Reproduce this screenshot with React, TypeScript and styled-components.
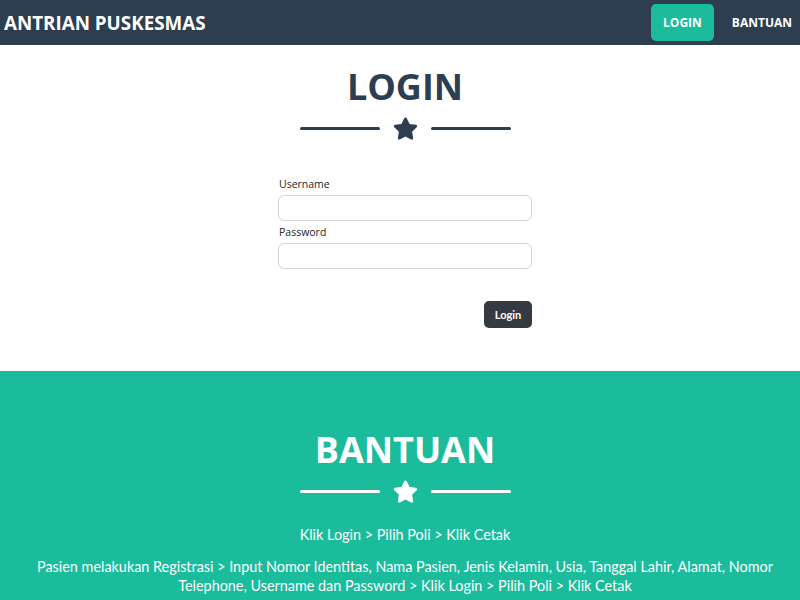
import React from 'react'
import styled, { createGlobalStyle } from 'styled-components'

const Global = createGlobalStyle`
  * { box-sizing: border-box; }
  body {
    margin: 0;
    font-family: Lato, "Open Sans", sans-serif;
    background: #fff;
  }
`

const Nav = styled.nav`
  height: 45px;
  background: #2c3e50;
  display: flex;
  align-items: center;
  justify-content: space-between;
  padding: 0 8px 0 4px;
`

const Brand = styled.a`
  font-family: "Open Sans", sans-serif;
  font-weight: 700;
  font-size: 18.8px;
  color: #fff;
`

const NavMenu = styled.div`
  display: flex;
  align-items: center;
  gap: 18px;
`

const NavLink = styled.a<{ $active?: boolean }>`
  font-family: "Open Sans", sans-serif;
  font-weight: 700;
  font-size: 12px;
  color: #fff;
  padding: 0 ${p => (p.$active ? '12px' : '0')};
  height: 37px;
  display: flex;
  align-items: center;
  border-radius: 5px;
  background: ${p => (p.$active ? '#1abc9c' : 'transparent')};
`

const Section = styled.section<{ $teal?: boolean }>`
  background: ${p => (p.$teal ? '#1abc9c' : '#fff')};
  color: ${p => (p.$teal ? '#fff' : '#2c3e50')};
  padding: ${p => (p.$teal ? '57px 0 40px 10px' : '20px 0 43px 10px')};
  display: flex;
  flex-direction: column;
  align-items: center;
`

const Heading = styled.h2`
  font-family: "Open Sans", sans-serif;
  font-weight: 700;
  font-size: 36px;
  line-height: 43px;
  margin: 0;
`

const Divider = styled.div`
  display: flex;
  align-items: center;
  gap: 13px;
  margin: 9px 0 0;
`

const Line = styled.div`
  width: 80px;
  height: 3px;
  border-radius: 2px;
  background: currentColor;
`

const Star = () => (
  <svg width="25" height="23" viewBox="0 0 576 512" fill="currentColor">
    <path d="M259.3 17.8L194 150.2 47.9 171.5c-26.2 3.8-36.7 36.1-17.7 54.6l105.7 103-25 145.5c-4.5 26.3 23.2 46 46.4 33.7L288 439.6l130.7 68.7c23.2 12.2 50.9-7.4 46.4-33.7l-25-145.5 105.7-103c19-18.5 8.5-50.8-17.7-54.6L382 150.2 316.7 17.8c-11.7-23.6-45.6-23.9-57.4 0z" />
  </svg>
)

const Form = styled.form`
  width: 254px;
  margin-top: 37px;
  display: flex;
  flex-direction: column;
`

const Label = styled.label`
  font-family: "Open Sans", sans-serif;
  font-size: 10.5px;
  color: #212529;
  margin: 0 0 4px 1px;
  line-height: 14px;
`

const Input = styled.input`
  width: 100%;
  height: 26px;
  border: 1px solid #ced4da;
  border-radius: 6px;
  margin-bottom: 4px;
  outline: none;
`

const Actions = styled.div`
  display: flex;
  justify-content: flex-end;
  margin-top: 28px;
`

const Button = styled.button`
  font-family: Lato, sans-serif;
  font-weight: 700;
  font-size: 11px;
  color: #fff;
  background: #343a40;
  border: none;
  border-radius: 5px;
  width: 48px;
  height: 27px;
`

const Text = styled.p<{ $gap: number }>`
  font-family: Lato, sans-serif;
  font-size: 14.4px;
  line-height: 19px;
  text-align: center;
  max-width: 760px;
  margin: ${p => p.$gap}px 0 0;
`

export default function App() {
  return (
    <>
      <Global />
      <Nav>
        <Brand>ANTRIAN PUSKESMAS</Brand>
        <NavMenu>
          <NavLink $active>LOGIN</NavLink>
          <NavLink>BANTUAN</NavLink>
        </NavMenu>
      </Nav>
      <Section>
        <Heading>LOGIN</Heading>
        <Divider>
          <Line />
          <Star />
          <Line />
        </Divider>
        <Form onSubmit={e => e.preventDefault()}>
          <Label>Username</Label>
          <Input type="text" />
          <Label>Password</Label>
          <Input type="password" />
          <Actions>
            <Button type="submit">Login</Button>
          </Actions>
        </Form>
      </Section>
      <Section $teal>
        <Heading>BANTUAN</Heading>
        <Divider>
          <Line />
          <Star />
          <Line />
        </Divider>
        <Text $gap={22}>Klik Login &gt; Pilih Poli &gt; Klik Cetak</Text>
        <Text $gap={13}>
          Pasien melakukan Registrasi &gt; Input Nomor Identitas, Nama Pasien, Jenis Kelamin, Usia, Tanggal Lahir, Alamat, Nomor Telephone, Username dan Password &gt; Klik Login &gt; Pilih Poli &gt; Klik Cetak
        </Text>
      </Section>
    </>
  )
}
